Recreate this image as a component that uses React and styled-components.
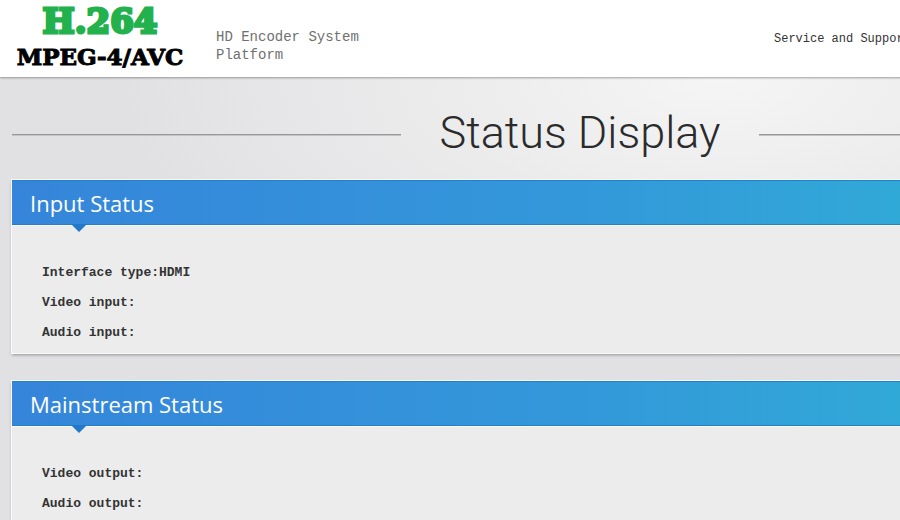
import styled, { createGlobalStyle } from 'styled-components';

const mono = "'Liberation Mono', 'Courier New', monospace";

const GlobalStyle = createGlobalStyle`
  body {
    margin: 0;
    overflow-x: hidden;
    background: #e1e1e3;
    color: #333;
    font-family: ${mono};
  }
`;

// the dashboard is never narrower than 1160px
const Page = styled.div`
  min-width: 1160px;
  min-height: 100vh;
  background: radial-gradient(
      ellipse 600px 280px at 720px 78px,
      #f5f5f6 0%,
      #ebebec 50%,
      #e6e6e8 75%,
      #e1e1e3 100%
    )
    no-repeat;
`;

const Header = styled.header`
  display: flex;
  box-sizing: border-box;
  height: 77px;
  background: #fff;
  box-shadow: 0 1px 2px rgba(0, 0, 0, 0.35);
`;

const Logo = styled.div`
  width: 200px;
  font-family: 'DejaVu Serif', serif;
  font-weight: bold;
  text-align: center;
`;

const Codec = styled.div`
  font-size: 34px;
  line-height: 42px;
  color: #22b14c;
  -webkit-text-stroke: 3px #22b14c;
`;

const Standard = styled.div`
  font-size: 23px;
  line-height: 30px;
  color: #000;
  -webkit-text-stroke: 1px #000;
`;

const Slogan = styled.p`
  width: 160px;
  margin: 28px 0 0 16px;
  font-size: 14px;
  line-height: 18px;
  color: #707070;
`;

const SupportLink = styled.a`
  margin: 30px 242px 0 auto;
  width: 144px;
  font-size: 12px;
  line-height: 18px;
  color: #333;
  text-decoration: none;
  white-space: nowrap;
`;

const Main = styled.main`
  padding: 0 12px;
`;

const TitleRow = styled.div`
  display: flex;
  align-items: center;
  gap: 39px;
  height: 103px;

  &::before,
  &::after {
    content: '';
    flex: 1;
    height: 1px;
    margin-top: 12px;
    background: #98989b;
    border-bottom: 1px solid #c4c4c7;
  }
`;

const Title = styled.h1`
  margin: 8px 0 0;
  font-family: Roboto, 'Liberation Sans', sans-serif;
  font-size: 45px;
  font-weight: 300;
  line-height: 60px;
  color: #2b2b2b;
`;

const Panel = styled.section`
  margin-bottom: 28px;
  background: #ececed;
  box-shadow: 0 0 0 1px #fafafa, 0 2px 3px rgba(0, 0, 0, 0.35);
`;

const PanelTitle = styled.h2`
  position: relative;
  box-sizing: border-box;
  height: 45px;
  margin: 0;
  padding: 0 18px;
  border: solid #2380c8;
  border-width: 1px 0;
  background: linear-gradient(90deg, #3585da, #3398da 50%, #30acd6 84%, #2fb0d0);
  box-shadow: 0 1px 0 #fafafa;
  font-family: 'Open Sans', 'Noto Sans', sans-serif;
  font-size: 22px;
  font-weight: 400;
  line-height: 44px;
  color: #fff;

  /* little pointer under the bar */
  &::after {
    content: '';
    position: absolute;
    top: 100%;
    left: 59px;
    border: 8px solid transparent;
    border-top-color: #2379c9;
    border-bottom: 0;
  }
`;

const StatusList = styled.ul`
  margin: 0;
  padding: 33px 30px 5px;
  list-style: none;
  font-size: 13px;
  font-weight: bold;
  line-height: 30px;
`;

const panels = [
  {
    title: 'Input Status',
    rows: ['Interface type:HDMI', 'Video input:', 'Audio input:'],
  },
  {
    title: 'Mainstream Status',
    rows: ['Video output:', 'Audio output:'],
  },
];

const StatusPanel = ({ title, rows }) => (
  <Panel>
    <PanelTitle>{title}</PanelTitle>
    <StatusList>
      {rows.map((row) => (
        <li key={row}>{row}</li>
      ))}
    </StatusList>
  </Panel>
);

const App = () => {
  return (
    <>
      <GlobalStyle />
      <Page>
        <Header>
          <Logo>
            <Codec>H.264</Codec>
            <Standard>MPEG-4/AVC</Standard>
          </Logo>
          <Slogan>HD Encoder System Platform</Slogan>
          <SupportLink href="#support">Service and Support</SupportLink>
        </Header>
        <Main>
          <TitleRow>
            <Title>Status Display</Title>
          </TitleRow>
          {panels.map((panel) => (
            <StatusPanel key={panel.title} {...panel} />
          ))}
        </Main>
      </Page>
    </>
  );
};

export default App;
